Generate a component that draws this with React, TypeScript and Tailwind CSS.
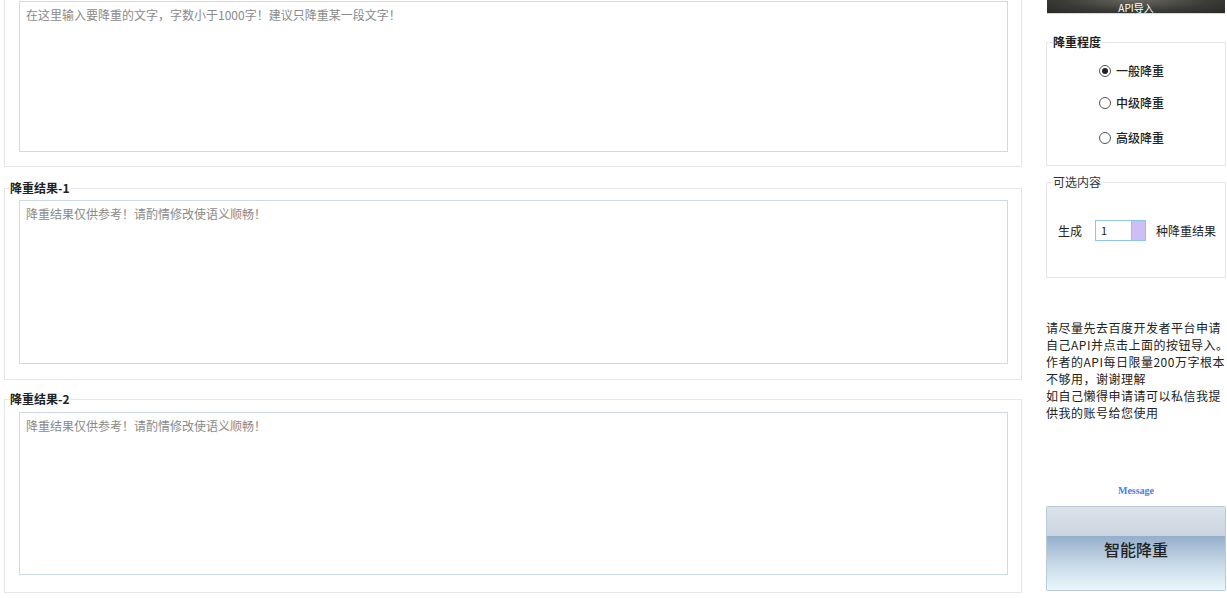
export default function App() {
  const levels = [
    { label: '一般降重', checked: true, mt: 'mt-[12px]' },
    { label: '中级降重', checked: false, mt: 'mt-[12px]' },
    { label: '高级降重', checked: false, mt: 'mt-[15px]' },
  ];

  return (
    <div className="w-[1227px] h-[598px] overflow-hidden bg-white flex font-['Noto_Sans_CJK_SC',sans-serif] text-[12px] text-[#222]">
      {/* left: input and results */}
      <div className="w-[1046px] pl-[4px] flex flex-col shrink-0">
        <fieldset className="w-[1018px] mt-[-15px] pt-[15px] px-[5px] pb-[14px] border border-[#e6e6e6]">
          <textarea
            className="block ml-[9px] w-[989px] h-[151px] resize-none border border-[#cbdbe7] px-[6px] py-[4px] text-[12px] leading-[18px] outline-none placeholder:text-[#8a8a8a]"
            placeholder="在这里输入要降重的文字，字数小于1000字！建议只降重某一段文字！"
          />
        </fieldset>

        <fieldset className="w-[1018px] mt-[14px] px-[5px] pb-[15px] border border-[#e6e6e6]">
          <legend className="px-0 text-[12px] leading-[14px] font-bold text-[#222]">降重结果-1</legend>
          <textarea
            className="block mt-[5px] ml-[9px] w-[989px] h-[164px] resize-none border border-[#cbdbe7] px-[6px] py-[4px] text-[12px] leading-[18px] outline-none placeholder:text-[#8a8a8a]"
            placeholder="降重结果仅供参考！请酌情修改使语义顺畅！"
          />
        </fieldset>

        <fieldset className="w-[1018px] mt-[12px] px-[5px] pb-[17px] border border-[#e6e6e6]">
          <legend className="px-0 text-[12px] leading-[14px] font-bold text-[#222]">降重结果-2</legend>
          <textarea
            className="block mt-[6px] ml-[9px] w-[989px] h-[163px] resize-none border border-[#cbdbe7] px-[6px] py-[4px] text-[12px] leading-[18px] outline-none placeholder:text-[#8a8a8a]"
            placeholder="降重结果仅供参考！请酌情修改使语义顺畅！"
          />
        </fieldset>
      </div>

      {/* right: options */}
      <div className="w-[180px] flex flex-col shrink-0">
        <button className="mt-[-14px] mx-[1px] h-[28px] flex items-end justify-center bg-[radial-gradient(ellipse_at_center,#6a6a62_0%,#3a3a36_60%,#2a2a28_100%)] border-b border-[#d8d8d8] text-[10px] leading-[11px] text-white">
          API导入
        </button>

        <fieldset className="mt-[21px] h-[131px] px-[6px] border border-[#e6e6e6]">
          <legend className="px-0 text-[12px] leading-[14px] font-bold text-[#222]">降重程度</legend>
          <div className="flex flex-col pl-[46px]">
            {levels.map((l) => (
              <label key={l.label} className={`${l.mt} h-[20px] flex items-center`}>
                <span className="w-[12px] h-[12px] rounded-full border border-[#555] bg-white flex items-center justify-center">
                  {l.checked && <span className="w-[6px] h-[6px] rounded-full bg-[#222]" />}
                </span>
                <span className="ml-[5px] text-[12px] font-medium text-[#222]">{l.label}</span>
              </label>
            ))}
          </div>
        </fieldset>

        <fieldset className="mt-[9px] h-[103px] px-[6px] border border-[#e6e6e6]">
          <legend className="px-0 text-[12px] leading-[14px] text-[#333]">可选内容</legend>
          <div className="mt-[31px] flex items-center pl-[5px]">
            <span className="text-[12px]">生成</span>
            <div className="ml-[13px] w-[51px] h-[21px] flex border border-[#8cc4ee] bg-white">
              <span className="flex-1 pl-[5px] text-[11px] leading-[19px]">1</span>
              <span className="w-[14px] h-full bg-[#cdbff5] border-l border-[#8cc4ee]" />
            </div>
            <span className="ml-[10px] text-[12px]">种降重结果</span>
          </div>
        </fieldset>

        <div className="mt-[41px] text-[12px] leading-[17px] text-[#222] whitespace-nowrap tracking-[0.5px]">
          请尽量先去百度开发者平台申请<br />
          自己API并点击上面的按钮导入。<br />
          作者的API每日限量200万字根本<br />
          不够用，谢谢理解<br />
          如自己懒得申请请可以私信我提<br />
          供我的账号给您使用
        </div>

        <div className="mt-[64px] text-center font-['Liberation_Serif',serif] font-bold text-[10px] leading-[12px] text-[#3d82e8]">
          Message
        </div>

        <button className="mt-[9px] h-[85px] flex flex-col border border-[#b9c9d9] rounded-[2px] overflow-hidden">
          <span className="h-[29px] w-full bg-gradient-to-b from-[#dbe2ea] to-[#cad5e1]" />
          <span className="flex-1 w-full flex items-start justify-center pt-[1px] bg-gradient-to-b from-[#94aecb] via-[#c6d8e6] to-[#eaf8fc] text-[16px] font-medium text-[#222]">
            智能降重
          </span>
        </button>
      </div>
    </div>
  );
}
